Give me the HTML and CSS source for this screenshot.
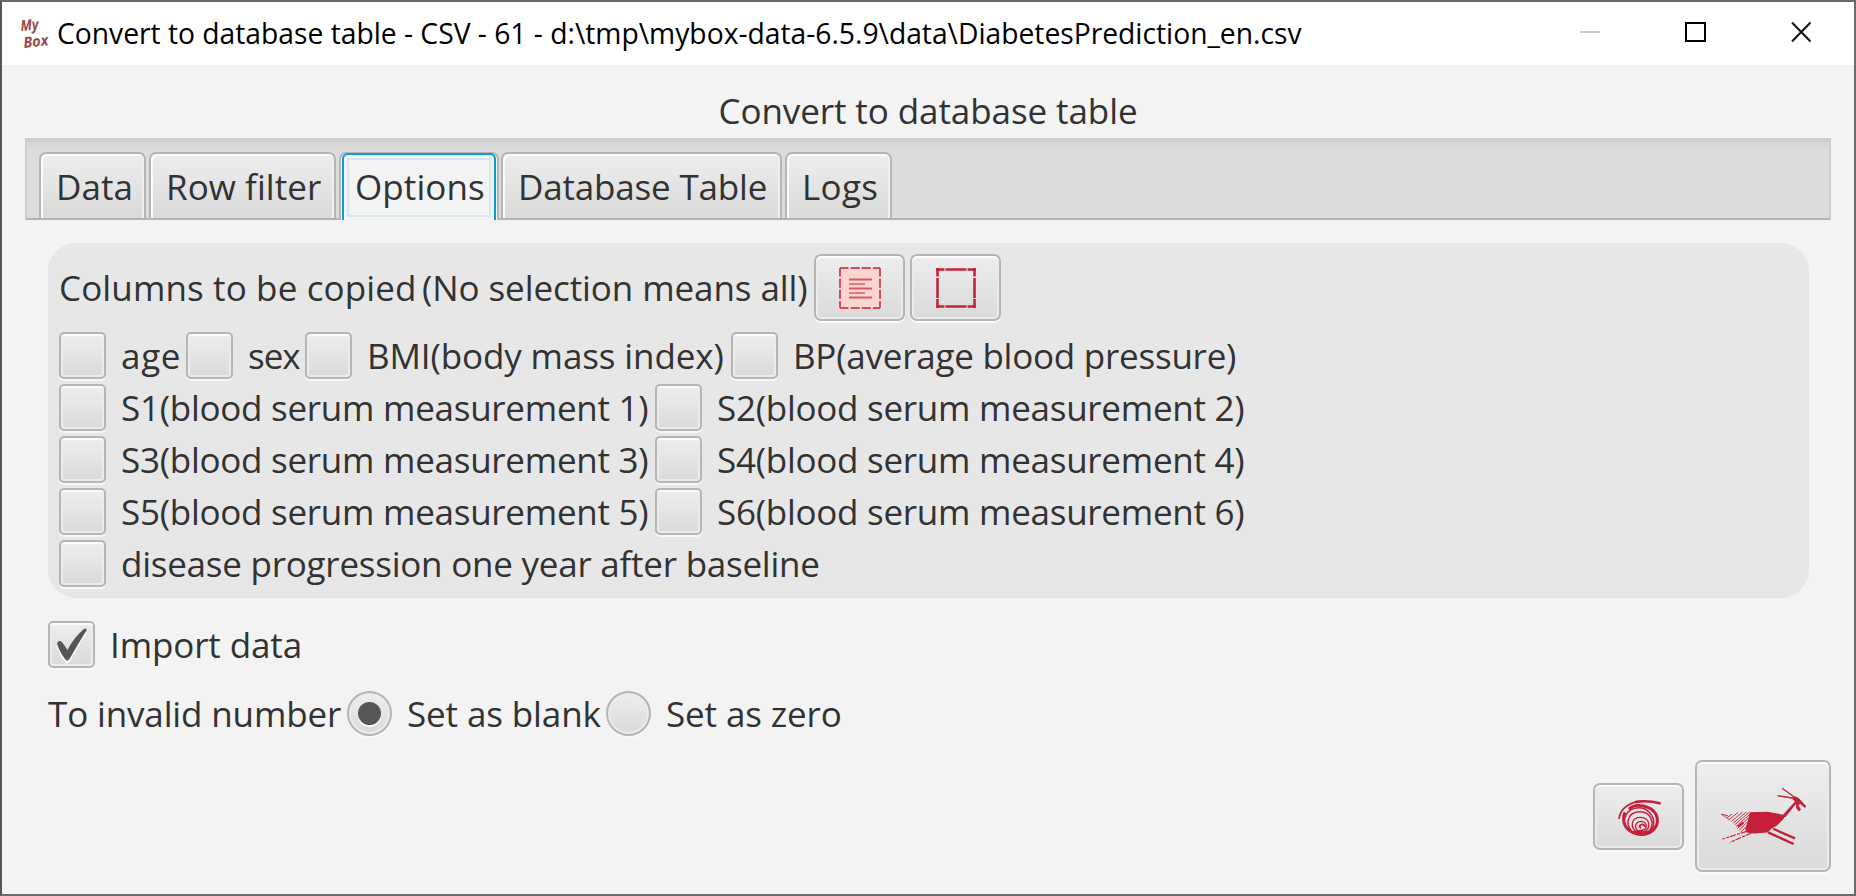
FILE: index.html
```html
<!DOCTYPE html>
<html lang="en">
<head>
<meta charset="utf-8">
<title>Convert to database table</title>
<link rel="stylesheet" href="styles.css">
</head>
<body>
<div class="window">
  <header class="titlebar">
    <svg class="logo" width="34" height="40" viewBox="0 0 34 40">
      <g class="logo-text">
        <text transform="translate(3 17) rotate(-5)" textLength="18" lengthAdjust="spacingAndGlyphs">My</text>
        <text transform="translate(6 34) rotate(-7)" textLength="25" lengthAdjust="spacingAndGlyphs">Box</text>
      </g>
    </svg>
    <span class="title">Convert to database table - CSV - 61 - d:\tmp\mybox-data-6.5.9\data\DiabetesPrediction_en.csv</span>
    <svg class="controls" width="240" height="24" viewBox="0 0 240 24">
      <path d="M0 12h20" stroke="#ccc" stroke-width="2"/>
      <path d="M106 3h19v18h-19z" fill="none" stroke="#000" stroke-width="2"/>
      <path d="M212 2.500l18.500 19M230.500 2.500l-18.500 19" stroke="#111" stroke-width="2"/>
    </svg>
  </header>

  <h1 class="heading">Convert to database table</h1>

  <nav class="tabs">
    <div class="tab tab-data">Data</div>
    <div class="tab tab-filter">Row filter</div>
    <div class="tab tab-options active"><span class="focus">Options</span></div>
    <div class="tab tab-table">Database Table</div>
    <div class="tab tab-logs">Logs</div>
  </nav>

  <main class="content">
    <section class="panel">
      <div class="panel-head">
        <span class="copied">Columns to be copied</span>
        <span class="hint">(No selection means all)</span>
        <button class="btn btn-small">
          <svg width="42" height="42" viewBox="0 0 42 42">
            <rect x="0.500" y="0.500" width="41" height="41" fill="#fcd5d1"/>
            <path d="M1 1h40M1 41h40M1 1v40M41 1v40" fill="none" stroke="#d04e60" stroke-width="2" stroke-dasharray="8.500 2.200 9 2 9 2.200 8.500"/>
            <path d="M10 12.500h23M10 21.500h23M10 30.500h23" stroke="#d65a6a" stroke-width="2"/>
            <path d="M10 17h16M10 26h16" stroke="#c62038" stroke-width="1.200"/>
          </svg>
        </button>
        <button class="btn btn-small">
          <svg width="40" height="40" viewBox="0 0 40 40">
            <path d="M0 1.500h8.500M9.500 1.500h21M31.500 1.500H40M0 38.500h8.500M9.500 38.500h21M31.500 38.500H40M1.500 0v8.500M1.500 10v20M1.500 31v9M38.500 0v8.500M38.500 10v20M38.500 31v9" stroke="#c42338" stroke-width="2.600"/>
          </svg>
        </button>
      </div>
      <div class="row">
        <label class="item w-age"><i class="box"></i><span class="ls-age">age</span></label>
        <label class="item w-sex"><i class="box"></i><span class="ls-sex">sex</span></label>
        <label class="item w-bmi"><i class="box"></i><span class="ls-slim">BMI(body mass index)</span></label>
        <label class="item"><i class="box"></i><span class="ls-wide">BP(average blood pressure)</span></label>
      </div>
      <div class="row">
        <label class="item w-serum"><i class="box"></i><span class="ls-serum">S1(blood serum measurement 1)</span></label>
        <label class="item"><i class="box"></i><span class="ls-serum">S2(blood serum measurement 2)</span></label>
      </div>
      <div class="row">
        <label class="item w-serum"><i class="box"></i><span class="ls-serum">S3(blood serum measurement 3)</span></label>
        <label class="item"><i class="box"></i><span class="ls-serum">S4(blood serum measurement 4)</span></label>
      </div>
      <div class="row">
        <label class="item w-serum"><i class="box"></i><span class="ls-serum">S5(blood serum measurement 5)</span></label>
        <label class="item"><i class="box"></i><span class="ls-serum">S6(blood serum measurement 6)</span></label>
      </div>
      <div class="row">
        <label class="item"><i class="box"></i><span class="ls-wide">disease progression one year after baseline</span></label>
      </div>
    </section>

    <div class="option import">
      <label class="item">
        <i class="box">
          <svg width="43" height="43" viewBox="0 0 43 43">
            <path d="M7 22Q9 18 12 21L17.500 29Q24 16 34 8Q37 6 36.500 9Q28 22 19.500 38Q17 41 15 38Q9.500 31 7 22Z" transform="translate(0 1)" fill="#fff"/>
            <path d="M7 20.500Q8.500 16.500 12 19L17.500 27Q24 14 34 6Q37 4.500 36.500 7.500Q28 21 19.500 36Q17 39 15 36Q9.500 29 7 20.500Z" fill="#565656"/>
          </svg>
        </i>
        <span class="ls-slim">Import data</span>
      </label>
    </div>

    <div class="option invalid">
      <span class="invalid-label">To invalid number</span>
      <label class="item w-blank"><i class="radio selected"></i><span class="ls-slim">Set as blank</span></label>
      <label class="item"><i class="radio"></i><span class="ls-slim">Set as zero</span></label>
    </div>
  </main>

  <footer class="actions">
    <button class="btn btn-small">
      <svg class="spiral" width="45" height="38" viewBox="0 0 136 114">
        <g fill="none" stroke="#c4203a">
          <path d="M6 60C10 24 45 5 85 6" stroke-width="5"/>
          <path d="M55 9Q90 2 132 13" stroke-width="8"/>
          <path d="M36 30C60 8 104 22 118 46C132 78 108 106 75 106C45 106 20 88 20 60Q20 48 24 40" stroke-width="9"/>
          <path d="M24 58C30 26 72 16 96 38C122 64 110 90 96 100" stroke-width="4.500"/>
          <path d="M50 102C24 80 28 42 65 38C104 36 116 74 96 98" stroke-width="4.500"/>
          <path d="M58 99C38 82 44 54 72 55C100 57 102 84 86 98" stroke-width="4"/>
          <path d="M64 97C50 84 56 67 74 67C94 70 92 92 76 94" stroke-width="4"/>
          <path d="M84 84Q84 76 74 77Q64 80 72 88" stroke-width="6"/>
        </g>
        <path d="M30 92Q48 100 72 92Q96 102 114 90Q97 112 72 111Q46 110 30 92Z" fill="#c4203a"/>
      </svg>
    </button>
    <button class="btn btn-start">
      <svg width="87" height="58" viewBox="0 0 262 175">
        <g fill="#c4203a">
          <path d="M90 76L142 75L160 78L198 85L190 98L172 116L155 126L143 137L102 140L80 137L76 128L82 108Z"/>
          <path d="M188 86L226 44L218 36L222 28L232 30L240 36L260 58L256 63L242 51L236 54L244 68L238 74L230 64L228 52L197 91Z"/>
        </g>
        <g fill="none" stroke="#c4203a">
          <path d="M187 4L228 33M173 26L222 34" stroke-width="4"/>
          <path d="M160 126L226 155M145 137L222 172" stroke-width="7"/>
          <path d="M80 134L7 157M94 139L30 167" stroke-width="3.500" stroke-dasharray="18 3 9 4"/>
          <path d="M4 82L24 87M22 92L36 82M28 98L54 77M34 104L68 76M40 109L80 75M44 114L88 76M48 119L90 82M52 125L86 93M57 131L84 104M62 137L82 116" stroke-width="2.800"/>
          <path d="M4 82L30 100" stroke-width="2.500"/>
          <path d="M54 120L70 108" stroke-width="7"/>
        </g>
      </svg>
    </button>
  </footer>
</div>
</body>
</html>
```
FILE: styles.css
```css
* {
  box-sizing: border-box;
}

body {
  margin: 0;
  width: 1856px;
  height: 896px;
  overflow: hidden;
  font-family: "Open Sans", "Noto Sans", sans-serif;
  font-size: 35px;
  color: #323232;
  white-space: nowrap;
}

.window {
  width: 1856px;
  height: 896px;
  display: flex;
  flex-direction: column;
  border: 2px solid #6c6a6b;
  border-left-color: #565656;
  background: #f3f3f3;
}

.titlebar {
  height: 63px;
  flex: none;
  display: flex;
  align-items: center;
  background: #fff;
  color: #000;
}

.logo {
  flex: none;
  margin-left: 16px;
  overflow: visible;
}

.logo-text {
  font: italic 700 15px "Open Sans", sans-serif;
  fill: #96494b;
}

.title {
  margin: 0 0 2px 5px;
  font-size: 28.25px;
  letter-spacing: -0.01px;
  line-height: 58px;
}

.controls {
  margin: 0 34px 3px auto;
}

.heading {
  margin: 0;
  height: 73px;
  flex: none;
  padding-top: 14px;
  font-size: 35px;
  font-weight: 400;
  letter-spacing: -0.08px;
  line-height: 64px;
  text-align: center;
}

.tabs {
  height: 82px;
  flex: none;
  margin: 0 23px;
  padding: 14px 12px 0;
  display: flex;
  border-style: solid;
  border-color: #cecece #cecece #b4b4b4;
  border-width: 0 2px 2px;
  background: linear-gradient(#cdcdcd, #dcdcdc 10px);
}

.tab {
  height: 66px;
  padding-left: 15px;
  line-height: 66px;
  border: 2px solid #b5b5b5;
  border-bottom: 0;
  border-radius: 7px 7px 0 0;
  background: linear-gradient(#eee, #dadada);
  box-shadow: inset 2px 2px 0 #fbfbfb, inset -2px 0 0 #f0f0f0;
}

.tab-data {
  width: 107px;
  margin-right: 3px;
  letter-spacing: 0.1px;
}

.tab-filter {
  width: 187px;
  margin-right: 3px;
  letter-spacing: 0.05px;
}

.tab-options {
  width: 160px;
  margin-right: 2px;
  letter-spacing: 0.1px;
}

.tab-table {
  width: 281px;
  margin-right: 3px;
  letter-spacing: -0.18px;
}

.tab-logs {
  width: 107px;
  letter-spacing: 0.3px;
}

.tab.active {
  height: 68px;
  padding: 0;
  background: #f3f3f3;
  box-shadow: none;
}

.focus {
  display: block;
  height: 67px;
  width: 154px;
  margin: -1px 0 0 1px;
  padding-left: 11px;
  line-height: 63px;
  border: 2px solid #0a9dd0;
  border-bottom: 0;
  border-radius: 6px 6px 0 0;
  box-shadow: inset 0 0 0 3px #f3f3f3, inset 0 0 0 5px #d6e7ef;
}

.content {
  flex: 1;
  padding: 23px 45px 0 46px;
}

.panel {
  height: 355px;
  padding: 11px;
  border-radius: 28px;
  background: #e7e7e7;
}

.panel-head {
  height: 78px;
  display: flex;
  align-items: flex-start;
  line-height: 67px;
}

.copied {
  width: 363px;
  letter-spacing: 0.13px;
}

.hint {
  width: 392px;
  letter-spacing: -0.08px;
}

.panel-head .btn {
  margin-right: 5px;
}

.btn {
  flex: none;
  display: flex;
  align-items: center;
  justify-content: center;
  padding: 0;
  border: 2px solid #b5b5b5;
  border-radius: 7px;
  background: linear-gradient(#eee, #dadada);
  box-shadow: inset 0 2px 0 #fcfcfc, inset 0 0 0 2px #ececec, 0 2px 0 #fafafa;
}

.btn-small {
  width: 91px;
  height: 67px;
}

.btn-start {
  width: 136px;
  height: 112px;
}

.row {
  height: 52px;
  display: flex;
}

.item {
  display: flex;
  gap: 15px;
  height: 47px;
  line-height: 47px;
}

.box {
  width: 47px;
  height: 47px;
  flex: none;
  border: 2px solid #b5b5b5;
  border-radius: 5px;
  background: linear-gradient(#eee, #dadada);
  box-shadow: inset 0 2px 0 #fcfcfc, inset 0 0 0 2px #ececec, 0 2px 0 #f8f8f8;
}

.box svg {
  display: block;
}

.radio {
  width: 45px;
  height: 45px;
  flex: none;
  display: flex;
  align-items: center;
  justify-content: center;
  border: 2px solid #b5b5b5;
  border-radius: 50%;
  background: linear-gradient(#eee, #dadada);
  box-shadow: inset 0 0 0 2px #ececec, 0 2px 0 #fafafa;
}

.radio.selected::after {
  content: "";
  width: 23px;
  height: 23px;
  border-radius: 50%;
  background: #565656;
  box-shadow: 0 2px 0 #fff;
}

.w-age { width: 127px; }
.w-sex { width: 119px; }
.w-bmi { width: 426px; }
.w-serum { width: 596px; }
.w-blank { width: 259px; }

.ls-age { letter-spacing: 0.7px; }
.ls-sex { letter-spacing: -1px; }
.ls-slim { letter-spacing: -0.12px; }
.ls-wide { letter-spacing: -0.24px; }
.ls-serum { letter-spacing: -0.265px; }

.option {
  display: flex;
}

.import {
  margin-top: 23px;
}

.invalid {
  margin-top: 23px;
}

.invalid .item {
  height: 45px;
  line-height: 45px;
}

.invalid-label {
  width: 299px;
  line-height: 45px;
  letter-spacing: -0.14px;
}

.actions {
  flex: none;
  height: 134px;
  padding: 0 23px 22px 0;
  display: flex;
  align-items: flex-start;
  justify-content: flex-end;
  gap: 11px;
}

.actions .btn-small {
  margin-top: 23px;
}

.spiral {
  margin: 2px 0 0 2px;
}
```
